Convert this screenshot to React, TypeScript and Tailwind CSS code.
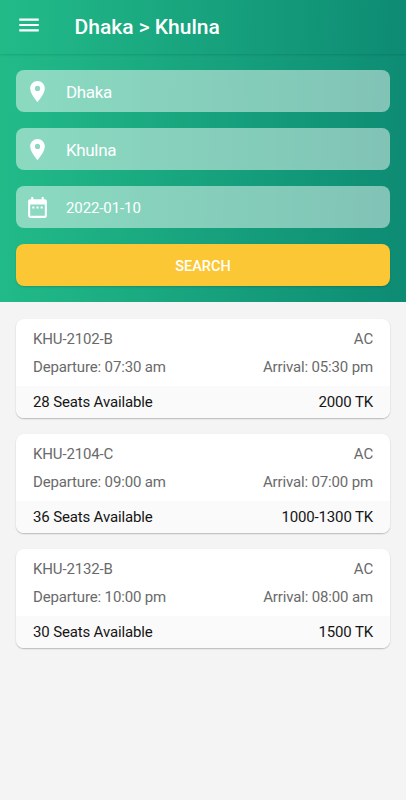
import React from 'react';
import { MdDateRange, MdLocationOn, MdMenu } from 'react-icons/md';

interface Trip {
    coach: string;
    type: string;
    departure: string;
    arrival: string;
    seats: number;
    fare: string;
}

const trips: Trip[] = [
    { coach: 'KHU-2102-B', type: 'AC', departure: '07:30 am', arrival: '05:30 pm', seats: 28, fare: '2000 TK' },
    { coach: 'KHU-2104-C', type: 'AC', departure: '09:00 am', arrival: '07:00 pm', seats: 36, fare: '1000-1300 TK' },
    { coach: 'KHU-2132-B', type: 'AC', departure: '10:00 pm', arrival: '08:00 am', seats: 30, fare: '1500 TK' },
];

interface FieldProps {
    icon: React.ReactNode;
    value: string;
    small?: boolean;
}

const Field: React.FC<FieldProps> = ({ icon, value, small = false }) => (
    <div className="flex h-[42px] items-center rounded-lg bg-white/48 pl-2 text-white">
        <span className="flex w-[26px] justify-center">{icon}</span>
        <span className={small ? 'ml-4 pt-0.5 text-[15px] tracking-[-0.1px]' : 'ml-4 pt-[3px] text-[17px] tracking-[-0.35px]'}>
            {value}
        </span>
    </div>
);

const TripCard: React.FC<{ trip: Trip }> = ({ trip }) => (
    <div className="h-[98.5px] overflow-hidden rounded-lg bg-white text-[15px] leading-[18px] tracking-[-0.15px] shadow-[0_1px_1.5px_rgba(0,0,0,0.25)]">
        <div className="flex h-[67px] flex-col gap-2.5 px-[17px] pt-[10.5px] text-[#6a6a6a]">
            <div className="flex justify-between">
                <span>{trip.coach}</span>
                <span>{trip.type}</span>
            </div>
            <div className="flex justify-between">
                <span>Departure: {trip.departure}</span>
                <span>Arrival: {trip.arrival}</span>
            </div>
        </div>
        <div className="flex h-8 items-center justify-between bg-[#fafafa] px-[17px] text-[#151515]">
            <span>{trip.seats} Seats Available</span>
            <span>{trip.fare}</span>
        </div>
    </div>
);

export default function App() {
    return (
        <div className="flex h-[800px] w-[406px] flex-col bg-[#f4f4f4] font-['Roboto',sans-serif]">
            <header className="z-10 flex h-[54px] items-center bg-linear-[92deg,#22bb88,#0d8b73] pl-4 text-white shadow-[0_1px_2px_rgba(0,0,0,0.12)]">
                <MdMenu className="mb-1 size-[26px]" />
                <h1 className="ml-[32.5px] pt-px text-[21px] font-medium">Dhaka &gt; Khulna</h1>
            </header>

            {/* Search form */}
            <section className="flex h-[248px] flex-col gap-4 bg-linear-[92deg,#22bb88,#0d8b73] px-4 pt-4">
                <Field icon={<MdLocationOn className="size-[25px]" />} value="Dhaka" />
                <Field icon={<MdLocationOn className="size-[25px]" />} value="Khulna" />
                <Field icon={<MdDateRange className="size-[25px]" />} value="2022-01-10" small />
                <button className="h-[42px] shrink-0 rounded-lg bg-[#fbc734] pt-[3px] text-[14.5px] font-medium text-white shadow-[0_1px_2px_rgba(0,0,0,0.15)]">
                    SEARCH
                </button>
            </section>

            {/* Available coaches */}
            <main className="flex flex-col gap-[16.5px] px-4 pt-[17px]">
                {trips.map((trip) => (
                    <TripCard key={trip.coach} trip={trip} />
                ))}
            </main>
        </div>
    );
}
